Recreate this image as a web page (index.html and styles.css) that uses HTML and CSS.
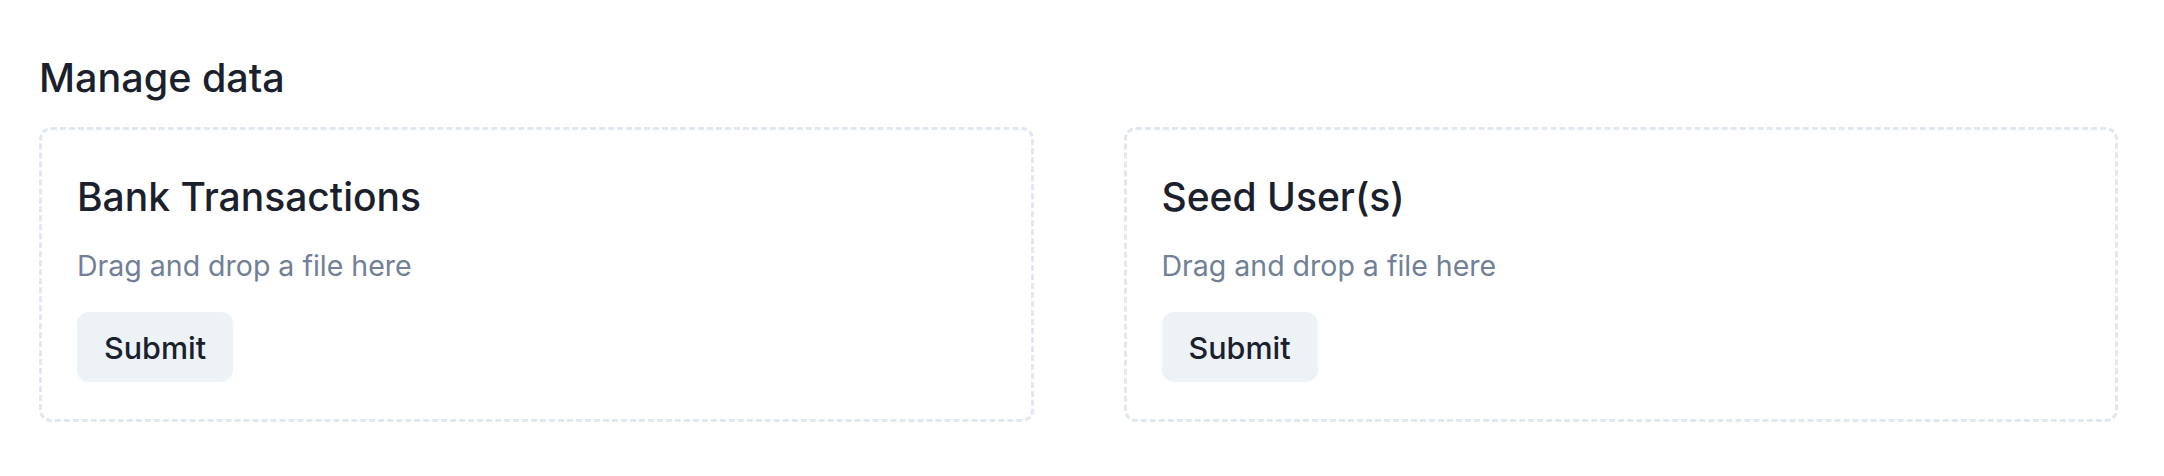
FILE: index.html
```html
<!DOCTYPE html>
<html lang="en">
<head>
<meta charset="utf-8">
<title>Manage data</title>
<link rel="stylesheet" href="styles.css">
</head>
<body>
<main class="page">
  <h1 class="page-title">Manage data</h1>
  <div class="grid">
    <section class="dropzone">
      <h2 class="dropzone-title">Bank Transactions</h2>
      <p class="dropzone-hint">Drag and drop a file here</p>
      <button class="btn" type="button">Submit</button>
    </section>
    <section class="dropzone">
      <h2 class="dropzone-title">Seed User(s)</h2>
      <p class="dropzone-hint">Drag and drop a file here</p>
      <button class="btn" type="button">Submit</button>
    </section>
  </div>
</main>
</body>
</html>
```

FILE: styles.css
```css
* { box-sizing: border-box; }
html, body {
  margin: 0;
  padding: 0;
  background: #ffffff;
}
body {
  font-family: Inter, "Noto Sans", sans-serif;
  color: #1A202C;
}
.page {
  padding: 54px 46px 0 39px;
}
.page-title {
  margin: 0 0 25px 0;
  font-size: 39.5px;
  line-height: 48px;
  font-weight: 500;
  color: #1A202C;
}
.grid {
  display: grid;
  grid-template-columns: 1fr 1fr;
  column-gap: 90px;
}
.dropzone {
  border: 3px dashed #E2E8F0;
  border-radius: 12px;
  padding: 43px 34px 37px 35px;
  display: flex;
  flex-direction: column;
  align-items: flex-start;
}
.dropzone-title {
  margin: 0;
  font-size: 39px;
  line-height: 48px;
  font-weight: 500;
  color: #1A202C;
}
.dropzone-hint {
  margin: 24px 0 25px 0;
  font-size: 28.5px;
  line-height: 42px;
  font-weight: 400;
  color: #718096;
}
.btn {
  height: 70px;
  padding: 0 27px;
  border: none;
  border-radius: 12px;
  background: #EDF2F7;
  color: #1A202C;
  font-family: Inter, "Noto Sans", sans-serif;
  font-size: 30.5px;
  font-weight: 500;
  cursor: pointer;
}
```
